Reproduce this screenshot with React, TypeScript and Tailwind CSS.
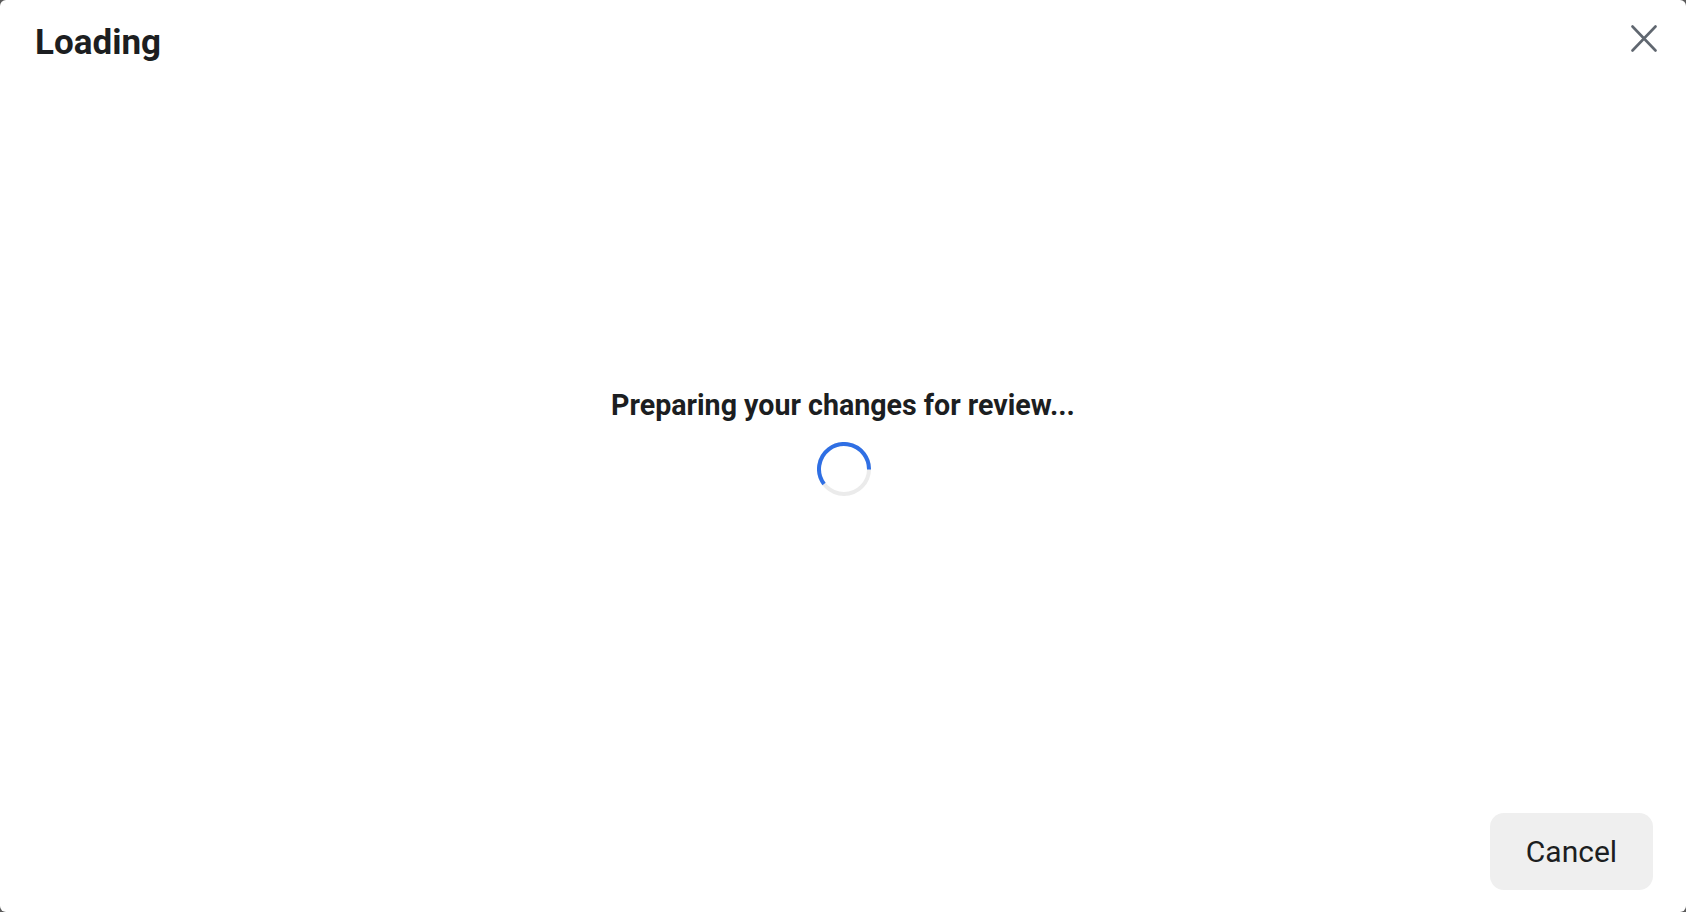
export default function App() {
  const font = { fontFamily: "Roboto, 'Liberation Sans', sans-serif" }

  return (
    <div className="h-[912px] w-full bg-[#5a5a5a]" style={font}>
      <div className="flex h-full flex-col rounded-[6px] bg-white text-[#1c1e21]">
        {/* header */}
        <div className="flex h-[80px] items-start justify-between pl-[35px] pr-[29px] pt-[22px]">
          <h1 className="text-[35px] font-bold leading-[41px]">Loading</h1>
          <button className="mt-[3px] text-[#606770]" aria-label="Close">
            <svg width="26" height="27" viewBox="0 0 26 27" fill="none">
              <path d="M1.5 1.5 L24.5 25.5 M24.5 1.5 L1.5 25.5" stroke="currentColor" strokeWidth="2.6" strokeLinecap="round" />
            </svg>
          </button>
        </div>

        {/* body */}
        <div className="flex flex-1 flex-col items-center justify-center gap-[20px] pb-[8px]">
          <p className="text-[28.6px] font-bold leading-[33px]">Preparing your changes for review...</p>
          <svg width="54" height="54" viewBox="0 0 54 54" className="ml-[2px]">
            <circle cx="27" cy="27" r="25" fill="none" stroke="#ebebeb" strokeWidth="4" />
            <circle
              cx="27"
              cy="27"
              r="25"
              fill="none"
              stroke="#2f6fe4"
              strokeWidth="4"
              strokeDasharray="94.6 200"
              transform="rotate(143 27 27)"
            />
          </svg>
        </div>

        {/* footer */}
        <div className="flex justify-end pb-[22px] pr-[33px]">
          <button className="h-[77px] w-[163px] rounded-[14px] bg-[#efefef] text-[30px] text-[#1c1e21]">Cancel</button>
        </div>
      </div>
    </div>
  )
}
